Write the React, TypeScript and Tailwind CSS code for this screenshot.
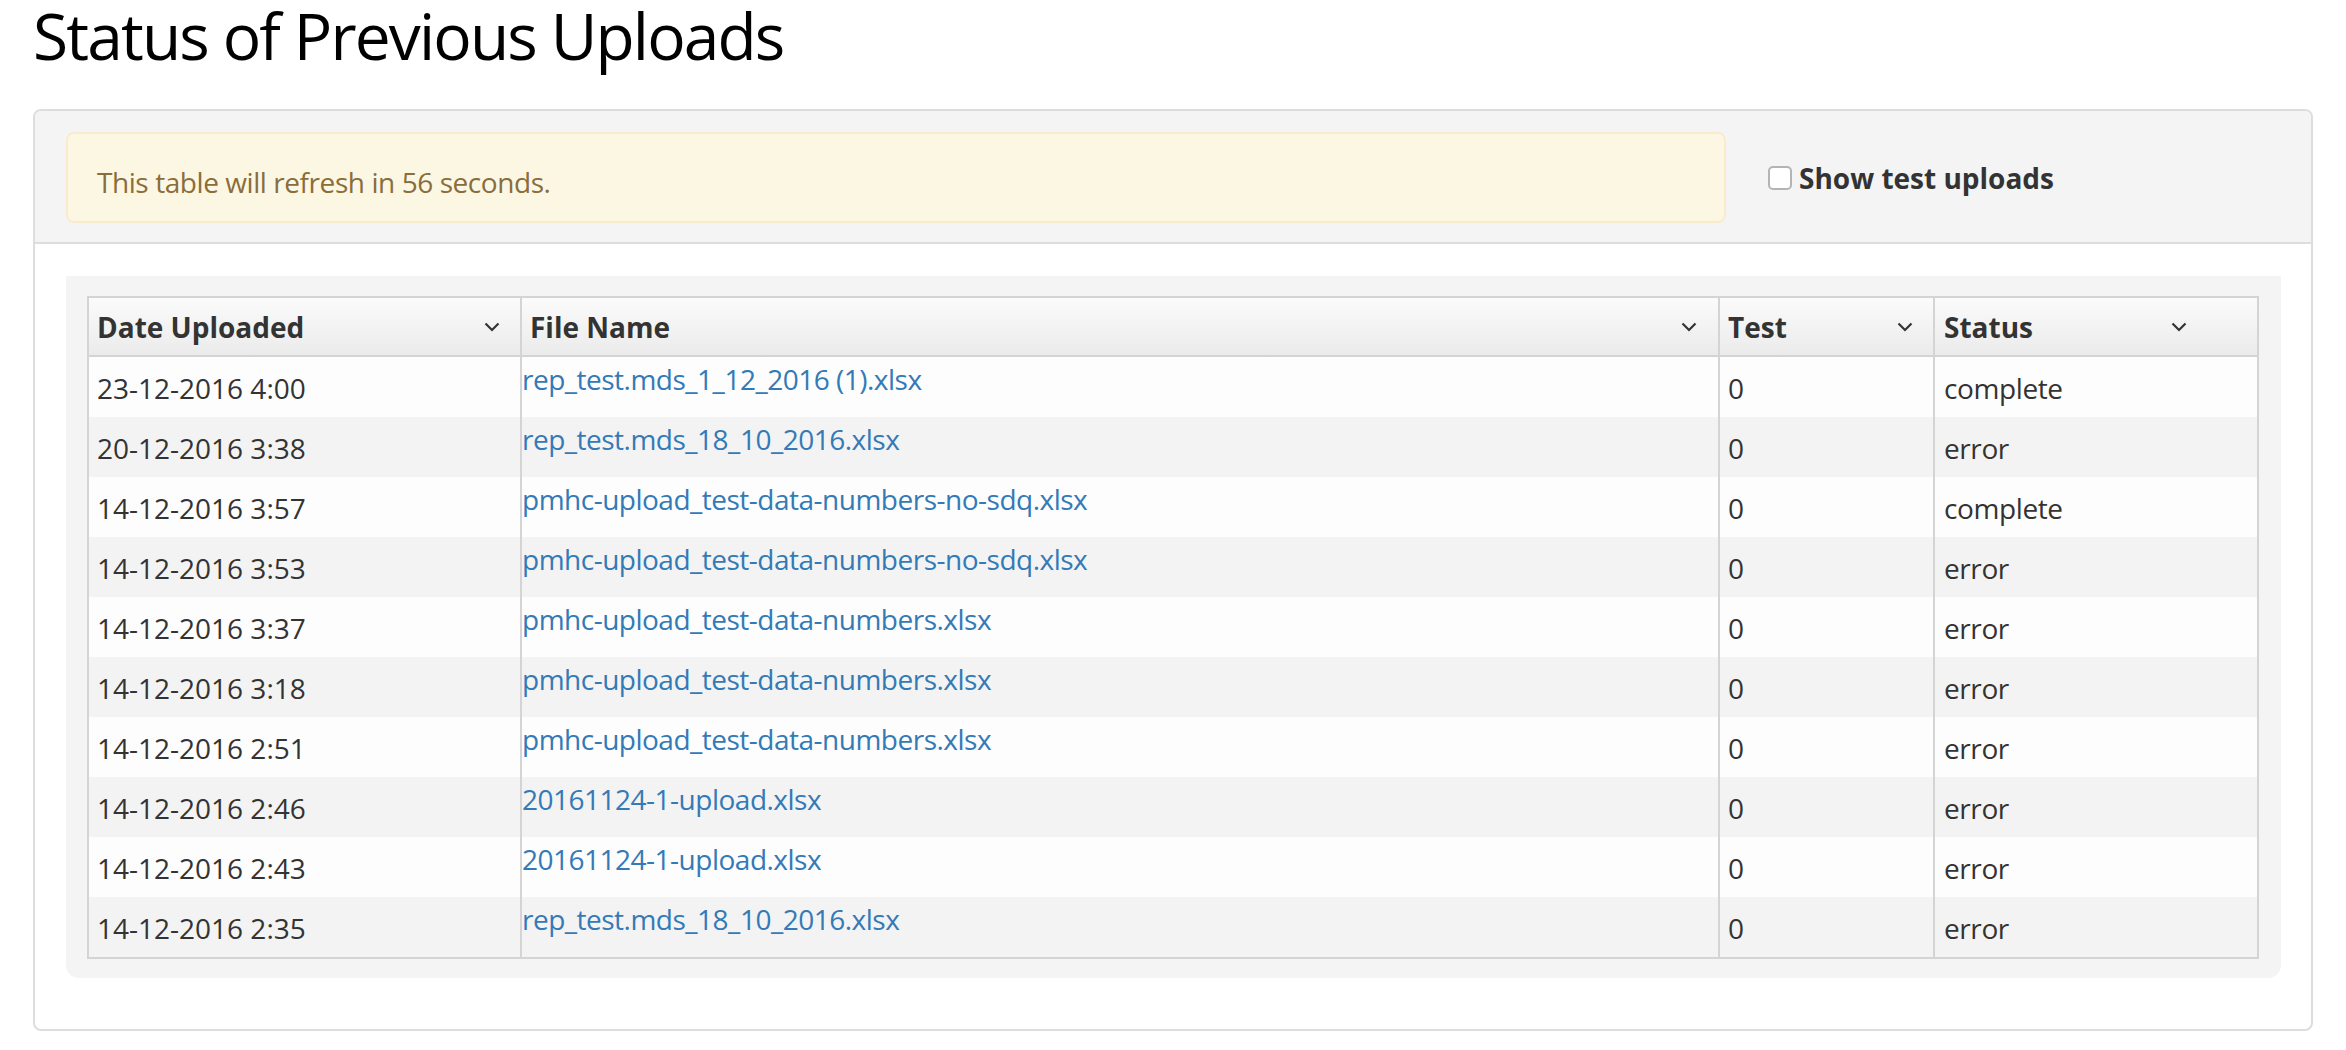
import React from "react";

const rows: [string, string, string, string][] = [
  ["23-12-2016 4:00", "rep_test.mds_1_12_2016 (1).xlsx", "0", "complete"],
  ["20-12-2016 3:38", "rep_test.mds_18_10_2016.xlsx", "0", "error"],
  ["14-12-2016 3:57", "pmhc-upload_test-data-numbers-no-sdq.xlsx", "0", "complete"],
  ["14-12-2016 3:53", "pmhc-upload_test-data-numbers-no-sdq.xlsx", "0", "error"],
  ["14-12-2016 3:37", "pmhc-upload_test-data-numbers.xlsx", "0", "error"],
  ["14-12-2016 3:18", "pmhc-upload_test-data-numbers.xlsx", "0", "error"],
  ["14-12-2016 2:51", "pmhc-upload_test-data-numbers.xlsx", "0", "error"],
  ["14-12-2016 2:46", "20161124-1-upload.xlsx", "0", "error"],
  ["14-12-2016 2:43", "20161124-1-upload.xlsx", "0", "error"],
  ["14-12-2016 2:35", "rep_test.mds_18_10_2016.xlsx", "0", "error"],
];

function Chevron() {
  return (
    <svg width="16" height="10" viewBox="0 0 16 10" className="shrink-0">
      <path d="M1.5 1.5 L8 8 L14.5 1.5" fill="none" stroke="#333" strokeWidth="2.2" />
    </svg>
  );
}

export default function App() {
  return (
    <div className="min-h-[1050px] w-[2346px] bg-white px-[33px] pt-[1px] font-['Open_Sans',sans-serif] text-[#333]">
      <h1 className="text-[64px] leading-[70px] font-normal tracking-[-1.85px] text-black">Status of Previous Uploads</h1>
      <div className="mt-[38px] rounded-[8px] border-2 border-[#dddddd] bg-white">
        <div className="flex items-center rounded-t-[6px] border-b-2 border-[#dddddd] bg-[#f4f4f4] pt-[21px] pb-[19px] pl-[31px]">
          <div className="h-[91px] w-[1660px] rounded-[8px] border-2 border-[#faebcc] bg-[#fcf7e3] pl-[29px] pt-[29px] text-[28px] leading-[38px] tracking-[-0.43px] text-[#8a6d3b]">
            This table will refresh in 56 seconds.
          </div>
          <label className="ml-[42px] flex items-center">
            <span className="h-[24px] w-[24px] rounded-[5px] border-2 border-[#b4b4b4] bg-white"></span>
            <span className="ml-[7px] text-[28px] leading-[38px] font-bold text-[#333]">Show test uploads</span>
          </label>
        </div>
        <div className="pt-[32px] pl-[31px] pr-[30px] pb-[51px]">
          <div className="rounded-b-[13px] bg-[#f4f4f4] pt-[20px] pl-[21px] pr-[22px] pb-[19px]">
            <div className="border-2 border-[#d4d4d4] text-[28px] leading-[38px]">
              <div className="flex h-[59px] border-b-2 border-[#d4d4d4] bg-linear-to-b from-[#fbfbfb] to-[#ebebeb] font-bold text-[#333]">
                <div className="flex w-[433px] items-center border-r-2 border-[#d4d4d4] pl-[8px] pr-[20px]">
                  <span className="flex-1">Date Uploaded</span>
                  <Chevron />
                </div>
                <div className="flex w-[1198px] items-center border-r-2 border-[#d4d4d4] pl-[8px] pr-[21px]">
                  <span className="flex-1">File Name</span>
                  <Chevron />
                </div>
                <div className="flex w-[215px] items-center border-r-2 border-[#d4d4d4] pl-[8px] pr-[20px]">
                  <span className="flex-1">Test</span>
                  <Chevron />
                </div>
                <div className="flex flex-1 items-center pl-[9px] pr-[70px]">
                  <span className="flex-1">Status</span>
                  <Chevron />
                </div>
              </div>
              {rows.map((r, i) => (
                <div key={i} className={`flex h-[60px] ${i % 2 === 0 ? "bg-[#fdfdfd]" : "bg-[#f3f3f3]"}`}>
                  <div className="w-[433px] border-r-2 border-[#d4d4d4] pl-[8px] pt-[12px]">{r[0]}</div>
                  <div className="w-[1198px] border-r-2 border-[#d4d4d4] pt-[3px] tracking-[-0.5px]">
                    <a className="text-[#337ab7]" href="#">{r[1]}</a>
                  </div>
                  <div className="w-[215px] border-r-2 border-[#d4d4d4] pl-[8px] pt-[12px]">{r[2]}</div>
                  <div className="flex-1 pl-[9px] pt-[12px] tracking-[-0.4px]">{r[3]}</div>
                </div>
              ))}
            </div>
          </div>
        </div>
      </div>
    </div>
  );
}
